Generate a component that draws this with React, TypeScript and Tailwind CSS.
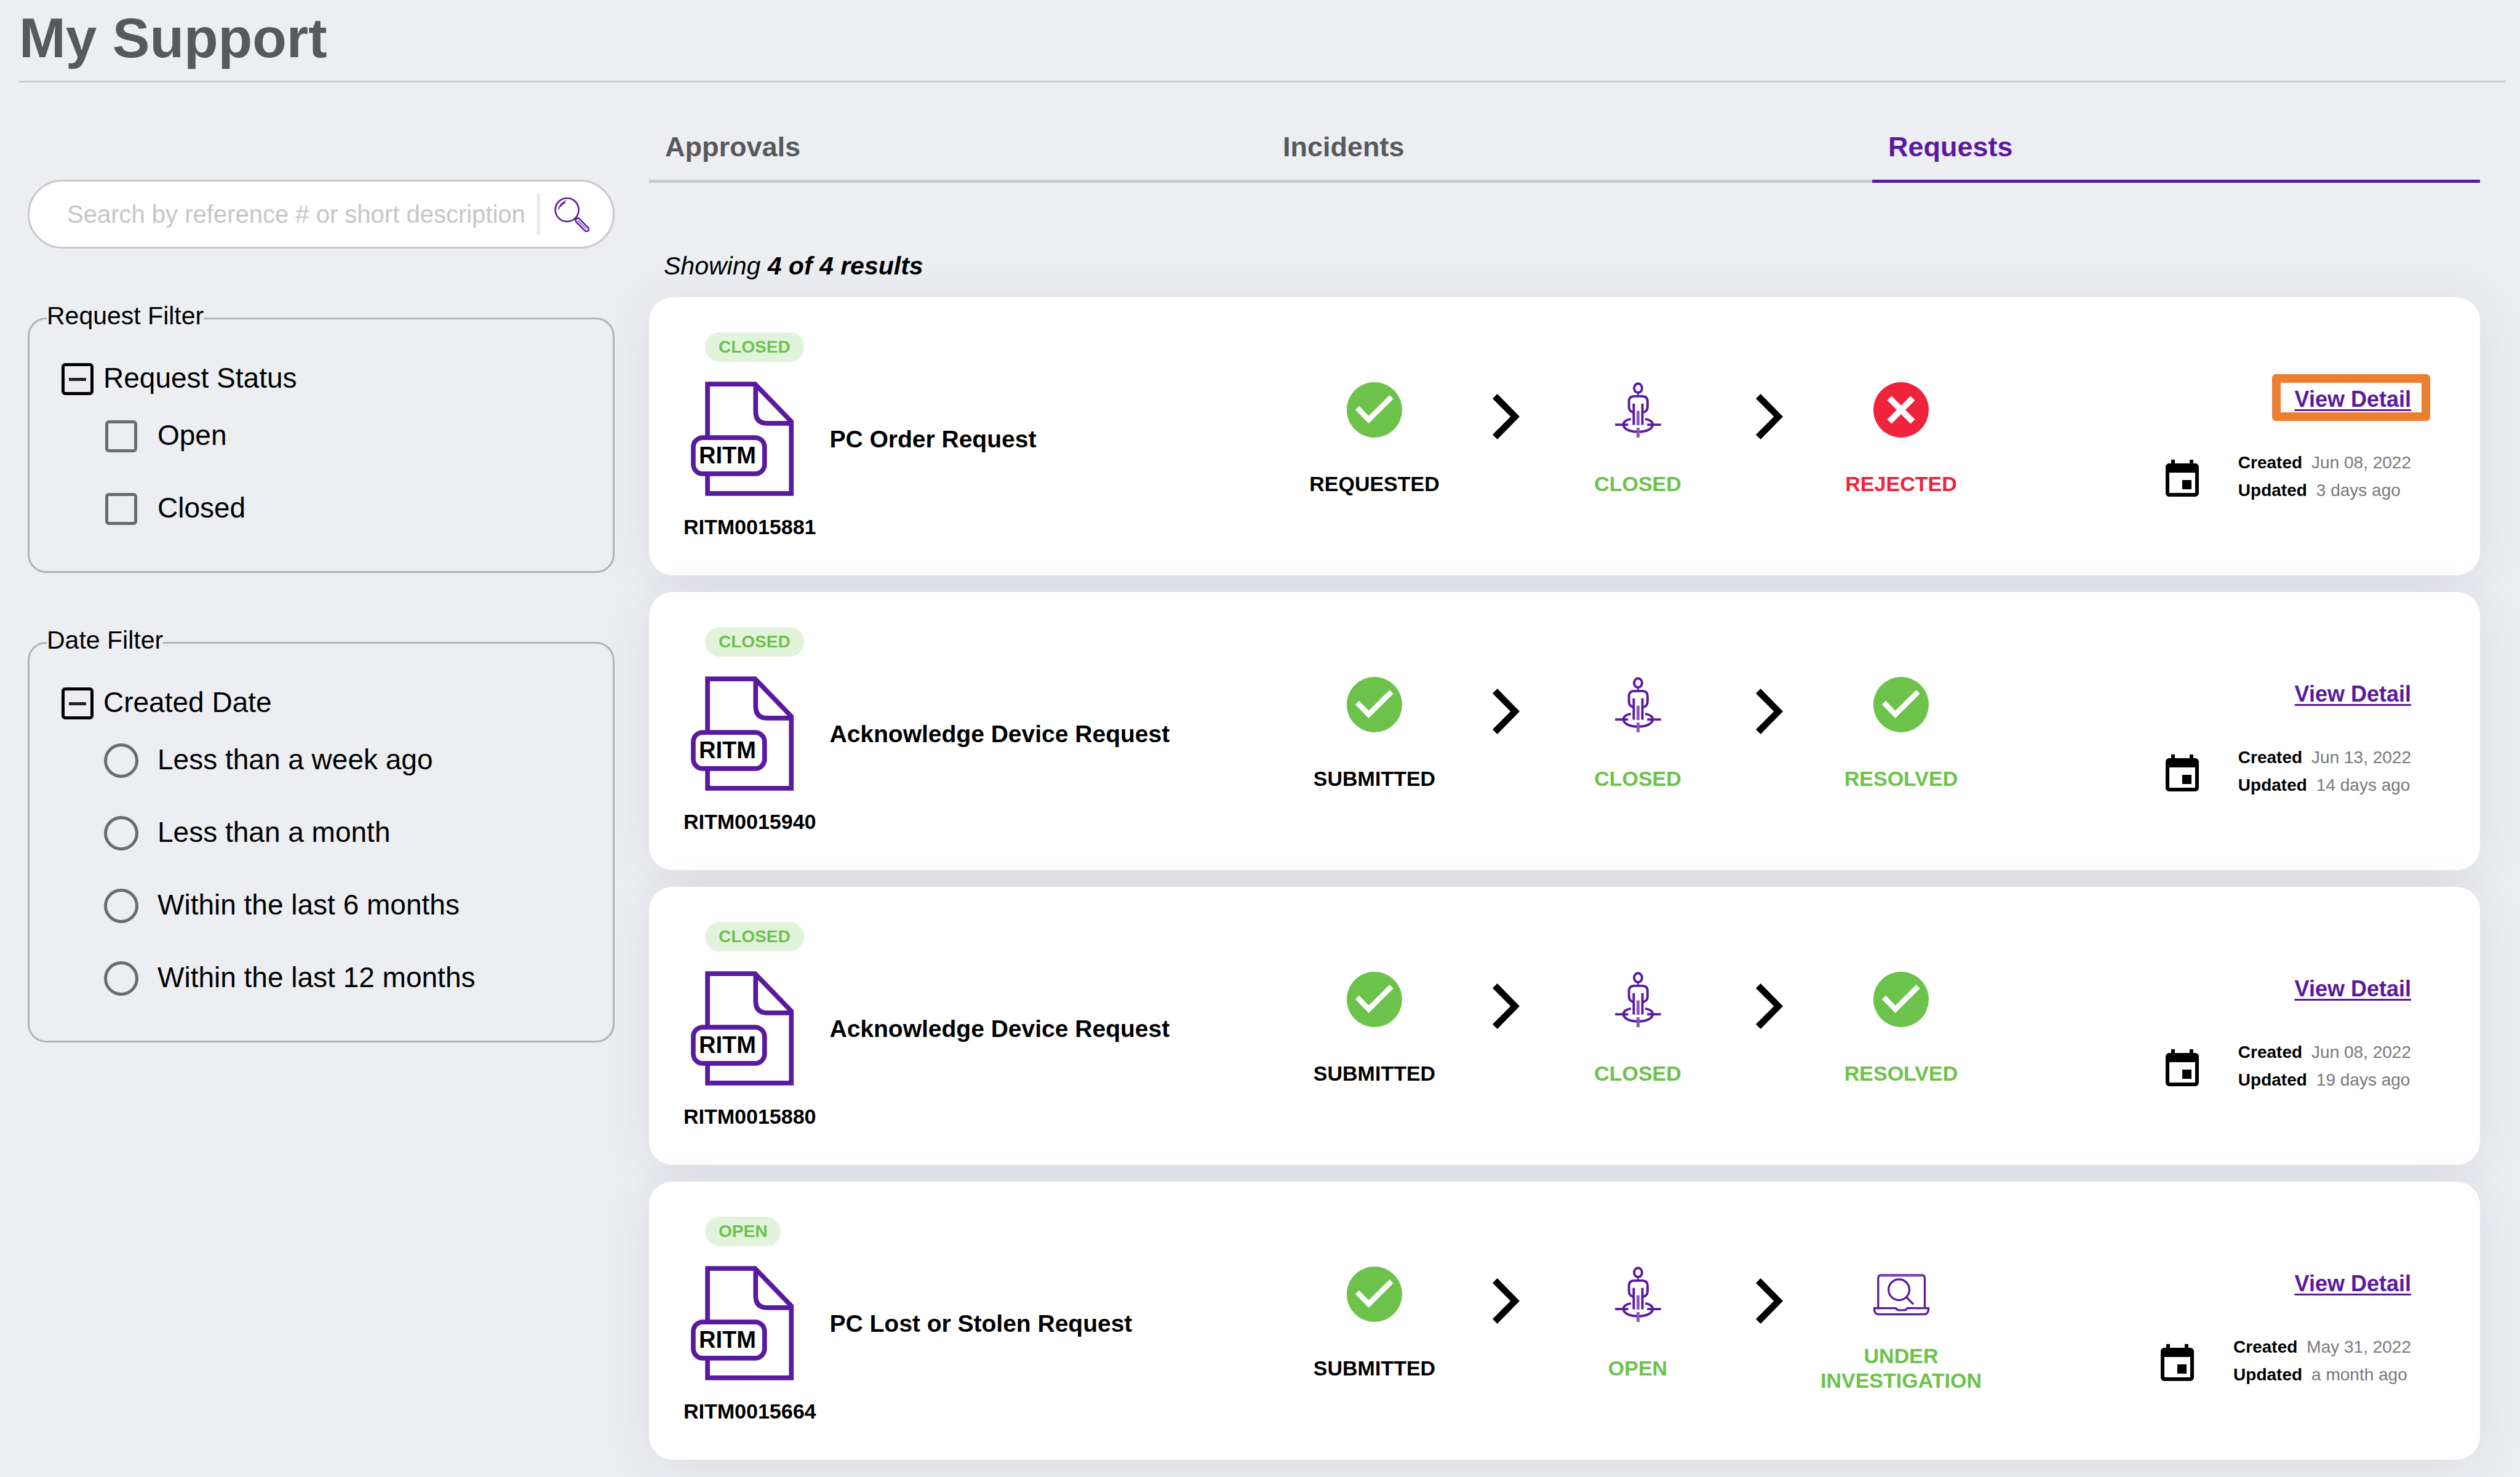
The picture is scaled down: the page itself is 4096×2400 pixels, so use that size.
import React, { useState } from "react";

type StepKind = "done" | "person" | "rejected" | "laptop";
type Tone = "black" | "green" | "red";

interface Step {
  kind: StepKind;
  label: string;
  tone: Tone;
}

interface RequestItem {
  id: string;
  status: string;
  title: string;
  steps: Step[];
  created: string;
  updated: string;
  highlighted?: boolean;
}

const requests: RequestItem[] = [
  {
    id: "RITM0015881",
    status: "CLOSED",
    title: "PC Order Request",
    steps: [
      { kind: "done", label: "REQUESTED", tone: "black" },
      { kind: "person", label: "CLOSED", tone: "green" },
      { kind: "rejected", label: "REJECTED", tone: "red" },
    ],
    created: "Jun 08, 2022",
    updated: "3 days ago",
    highlighted: true,
  },
  {
    id: "RITM0015940",
    status: "CLOSED",
    title: "Acknowledge Device Request",
    steps: [
      { kind: "done", label: "SUBMITTED", tone: "black" },
      { kind: "person", label: "CLOSED", tone: "green" },
      { kind: "done", label: "RESOLVED", tone: "green" },
    ],
    created: "Jun 13, 2022",
    updated: "14 days ago",
  },
  {
    id: "RITM0015880",
    status: "CLOSED",
    title: "Acknowledge Device Request",
    steps: [
      { kind: "done", label: "SUBMITTED", tone: "black" },
      { kind: "person", label: "CLOSED", tone: "green" },
      { kind: "done", label: "RESOLVED", tone: "green" },
    ],
    created: "Jun 08, 2022",
    updated: "19 days ago",
  },
  {
    id: "RITM0015664",
    status: "OPEN",
    title: "PC Lost or Stolen Request",
    steps: [
      { kind: "done", label: "SUBMITTED", tone: "black" },
      { kind: "person", label: "OPEN", tone: "green" },
      { kind: "laptop", label: "UNDER INVESTIGATION", tone: "green" },
    ],
    created: "May 31, 2022",
    updated: "a month ago",
  },
];

const toneClass: Record<Tone, string> = {
  black: "text-black",
  green: "text-[#6cc24a]",
  red: "text-[#f0233c]",
};

function SearchIcon() {
  return (
    <svg viewBox="0 0 177 177" className="size-[57px]" fill="none" stroke="#5a1a9f" strokeWidth="8" strokeLinecap="round" aria-hidden="true">
      <circle cx="64" cy="65" r="59" />
      <path d="M21 62Q27 36 58 19M32 48Q40 34 54 29" strokeWidth="5" />
      <path d="M106 112L113 107" />
      <g transform="translate(108 108) rotate(45)">
        <rect x="4" y="-11" width="84" height="22" rx="10" />
        <path d="M18 0H74" strokeWidth="4" />
      </g>
    </svg>
  );
}

function DocumentIcon() {
  return (
    <svg viewBox="0 0 174 192" className="h-[186px] w-[168px]" fill="none" stroke="#5a1a9f" strokeWidth="8" aria-hidden="true">
      <path d="M28 91V4H108L169 67V188H28V158" />
      <path d="M109 4V50Q109 70 128 70H169" />
      <rect x="4" y="94" width="120" height="61" rx="16" />
    </svg>
  );
}

function DoneIcon() {
  return (
    <svg viewBox="0 0 280 280" className="size-[90px]" aria-hidden="true">
      <circle cx="140" cy="140" r="140" fill="#6cc24a" />
      <path d="M53 130L111 189L226 75" fill="none" stroke="#fff" strokeWidth="27" />
    </svg>
  );
}

function RejectedIcon() {
  return (
    <svg viewBox="0 0 280 280" className="size-[90px]" aria-hidden="true">
      <circle cx="140" cy="140" r="140" fill="#f0233c" />
      <path d="M81 81L199 199M199 81L81 199" stroke="#fff" strokeWidth="31" />
    </svg>
  );
}

function PersonIcon() {
  return (
    <svg viewBox="0 0 232 280" className="h-[90px] w-[75px]" fill="none" stroke="#5a1a9f" strokeWidth="12" aria-hidden="true">
      <ellipse cx="116" cy="30" rx="20" ry="23" />
      <path d="M116 56V70" strokeWidth="8" />
      <path d="M92 153Q70 146 70 125V98Q70 71 96 71H138Q164 71 164 98V125Q164 146 142 153" />
      <path d="M94 108V216M138 108V216" />
      <path d="M116 145V218" stroke="#8a55bd" strokeWidth="15" />
      <path d="M80 186C55 190 42 202 42 215C42 236 74 251 116 251C158 251 190 236 190 215C190 202 177 190 152 186" />
      <path d="M0 215H66M162 215H232" />
      <path d="M116 230V280" stroke="#8a55bd" strokeWidth="15" />
    </svg>
  );
}

function LaptopIcon() {
  return (
    <svg viewBox="0 0 280 212" className="h-[69px] w-[91px]" fill="none" stroke="#5a1a9f" strokeWidth="10" aria-hidden="true">
      <path d="M24 172V26Q24 8 42 8H238Q257 8 257 26V172" />
      <path d="M36 10H244" stroke="#7f48b8" strokeWidth="14" />
      <path d="M5 174H112Q118 184 126 184H156Q164 184 170 174H275V184Q271 205 254 205H26Q9 205 5 184Z" />
      <circle cx="128" cy="82" r="52" />
      <path d="M166 120L200 155" />
    </svg>
  );
}

function ChevronIcon() {
  return (
    <svg viewBox="0 0 137 230" className="h-[74px] w-[44px]" aria-hidden="true">
      <path d="M0 24L24 0L137 115L24 230L0 206L91 115Z" />
    </svg>
  );
}

function CalendarIcon() {
  return (
    <svg viewBox="0 0 24 24" className="mt-3 size-[72px]" aria-hidden="true">
      <path d="M17 12h-5v5h5v-5zM16 1v2H8V1H6v2H5c-1.11 0-1.99.9-1.99 2L3 19c0 1.1.89 2 2 2h14c1.1 0 2-.9 2-2V5c0-1.1-.9-2-2-2h-1V1h-2zm3 18H5V8h14v11z" />
    </svg>
  );
}

const stepIcons: Record<StepKind, () => React.JSX.Element> = {
  done: DoneIcon,
  person: PersonIcon,
  rejected: RejectedIcon,
  laptop: LaptopIcon,
};

interface FilterGroupProps {
  legend: string;
  heading: string;
  type: "checkbox" | "radio";
  name: string;
  options: string[];
}

function FilterGroup({ legend, heading, type, name, options }: FilterGroupProps) {
  const [open, setOpen] = useState(true);
  return (
    <fieldset className="rounded-[30px] border-3 border-[#b1b3b6] px-[28px] pb-[42px]">
      <legend className="pb-2 text-[41px] leading-[46px]">{legend}</legend>
      <div className="pt-[38px] pl-6">
        <button type="button" aria-expanded={open} onClick={() => setOpen(!open)} className="flex h-[68px] items-center gap-4">
          <span className="flex size-[52px] items-center justify-center rounded-md border-5 border-black">
            {open ? <span className="h-[5px] w-7 bg-[#222]" /> : null}
          </span>
          <span className="pb-1 text-[46px] leading-[56px]">{heading}</span>
        </button>
        {open ? (
          <div className="pl-[69px]">
            {options.map((option) => (
              <label key={option} className="flex h-[118px] items-center gap-[31px]">
                <span className="flex w-14 justify-center">
                  <input
                    type={type}
                    name={name}
                    className={
                      type === "radio"
                        ? "size-14 appearance-none rounded-full border-5 border-[#6a6b6d] checked:bg-[#5a1a9f]"
                        : "size-[52px] appearance-none rounded-md border-5 border-[#6a6b6d] checked:bg-[#5a1a9f]"
                    }
                  />
                </span>
                <span className="pb-1 text-[46px] leading-[56px]">{option}</span>
              </label>
            ))}
          </div>
        ) : null}
      </div>
    </fieldset>
  );
}

function RequestCard({ item }: { item: RequestItem }) {
  return (
    <article className="grid grid-cols-[1043fr_1128px_805fr] rounded-[38px] bg-white shadow-[0_8px_80px_rgba(50,45,65,0.09)]">
      <div className="flex gap-[22px] pt-[57px] pb-[59px] pl-14">
        <div className="flex flex-col items-start">
          <span className="ml-[35px] flex h-12 items-center rounded-full bg-[#e2f3dc] px-[22px] text-[28px] leading-none font-bold text-[#6cc24a]">
            {item.status}
          </span>
          <div className="relative mt-8 ml-3">
            <DocumentIcon />
            <span className="absolute top-[98px] left-[13px] text-[38px] leading-[44px] font-bold">RITM</span>
          </div>
          <span className="mt-[30px] text-[34px] leading-[40px] font-bold">{item.id}</span>
        </div>
        <h2 className="mt-[81px] flex h-[186px] items-center text-[39px] leading-[48px] font-bold">{item.title}</h2>
      </div>

      <ol className="flex items-start pt-[138px]">
        {item.steps.map((step, index) => {
          const Icon = stepIcons[step.kind];
          return (
            <React.Fragment key={index}>
              {index > 0 ? (
                <li className="flex w-[156px] justify-center pt-[19px]" aria-hidden="true">
                  <ChevronIcon />
                </li>
              ) : null}
              <li className="flex w-[272px] flex-col items-center gap-[35px]">
                <span className="flex h-[90px] items-center">
                  <Icon />
                </span>
                <span className={"flex h-20 items-center text-center text-[34px] leading-[40px] font-bold " + toneClass[step.tone]}>
                  {step.label}
                </span>
              </li>
            </React.Fragment>
          );
        })}
      </ol>

      <div className="flex flex-col items-end gap-14 pt-[142px] pr-28">
        <div className="relative">
          <a
            href={"#" + item.id}
            className="block text-[36px] leading-[48px] font-bold text-[#5a1a9f] underline decoration-3 underline-offset-4"
          >
            View Detail
          </a>
          {item.highlighted ? (
            <span className="pointer-events-none absolute -top-[17px] -right-[31px] -bottom-[11px] -left-[37px] rounded-md border-14 border-[#ed7d31]" />
          ) : null}
        </div>
        <div className="flex items-center gap-[55px]">
          <CalendarIcon />
          <dl className="text-[28px] leading-[45px]">
            <div className="flex gap-[15px]">
              <dt className="font-bold">Created</dt>
              <dd className="text-[#77787b]">{item.created}</dd>
            </div>
            <div className="flex gap-[15px]">
              <dt className="font-bold">Updated</dt>
              <dd className="text-[#77787b]">{item.updated}</dd>
            </div>
          </dl>
        </div>
      </div>
    </article>
  );
}

const tabs = ["Approvals", "Incidents", "Requests"];

export default function App() {
  const [activeTab, setActiveTab] = useState("Requests");
  return (
    <div className="min-h-screen overflow-hidden bg-[#eceef2] pb-[26px] font-['Liberation_Sans',Arial,sans-serif] text-black">
      <header className="mr-6 ml-[31px] border-b-3 border-[#c8c9cb] pt-2 pb-[15px]">
        <h1 className="text-[91px] leading-[108px] font-bold text-[#58595b]">My Support</h1>
      </header>

      <div className="flex items-start gap-14 pr-[65px] pl-[45px]">
        <aside className="flex w-[954px] shrink-0 flex-col gap-[86px] pt-[158px]">
          <form
            role="search"
            onSubmit={(event) => event.preventDefault()}
            className="flex h-[112px] items-center rounded-full border-3 border-[#c8c8c8] bg-white pr-[38px] pl-[61px]"
          >
            <input
              type="text"
              aria-label="Search requests"
              placeholder="Search by reference # or short description"
              className="h-[60px] min-w-0 flex-1 bg-transparent text-[40px] outline-none placeholder:text-[#c6c6c6]"
            />
            <span className="h-[68px] w-[5px] bg-[#ebebeb]" />
            <button type="submit" aria-label="Search" className="ml-[23px]">
              <SearchIcon />
            </button>
          </form>
          <FilterGroup legend="Request Filter" heading="Request Status" type="checkbox" name="status" options={["Open", "Closed"]} />
          <FilterGroup
            legend="Date Filter"
            heading="Created Date"
            type="radio"
            name="created"
            options={["Less than a week ago", "Less than a month", "Within the last 6 months", "Within the last 12 months"]}
          />
        </aside>

        <main className="min-w-0 flex-1 pt-[78px]">
          <div role="tablist" className="grid grid-cols-[1004fr_984fr_988fr]">
            {tabs.map((tab) => (
              <button
                key={tab}
                type="button"
                role="tab"
                aria-selected={tab === activeTab}
                onClick={() => setActiveTab(tab)}
                className={
                  "border-b-5 px-[26px] pb-[26px] text-left text-[45px] leading-[54px] font-bold " +
                  (tab === activeTab ? "border-[#5a1a9f] text-[#5a1a9f]" : "border-[#c8c9cb] text-[#58595b]")
                }
              >
                {tab}
              </button>
            ))}
          </div>
          <p className="mt-[111px] pl-6 text-[41px] leading-[48px] italic">
            Showing <strong>4 of 4 results</strong>
          </p>
          <div className="mt-[27px] flex flex-col gap-[27px]">
            {requests.map((item) => (
              <RequestCard key={item.id} item={item} />
            ))}
          </div>
        </main>
      </div>
    </div>
  );
}
